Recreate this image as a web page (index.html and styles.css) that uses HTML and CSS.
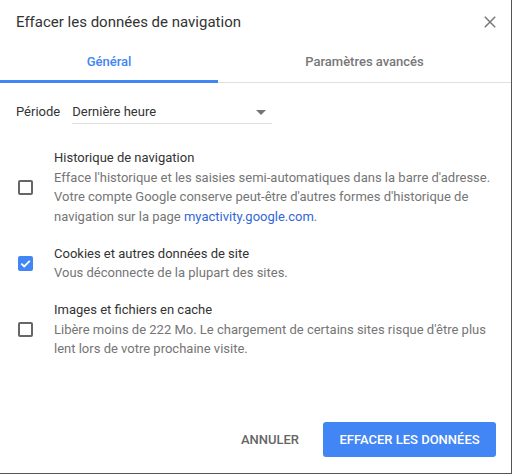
FILE: index.html
```html
<!DOCTYPE html>
<html lang="fr">
<head>
<meta charset="utf-8">
<link rel="stylesheet" href="styles.css">
</head>
<body>
<div class="dialog">
  <div class="header">
    <div class="title">Effacer les données de navigation</div>
    <svg class="close" width="12" height="12" viewBox="0 0 12 12"><path d="M0.8 0.8 L11.2 11.2 M11.2 0.8 L0.8 11.2" stroke="#777" stroke-width="1.5" fill="none"/></svg>
  </div>
  <div class="tabs">
    <div class="tab active">Général</div>
    <div class="tab">Paramètres avancés</div>
  </div>
  <div class="body">
    <div class="period">
      <span class="period-label">Période</span>
      <div class="select">
        <span>Dernière heure</span>
        <span class="arrow"></span>
      </div>
    </div>
    <div class="option">
      <div class="cb"></div>
      <div class="texts">
        <div class="opt-title">Historique de navigation</div>
        <div class="opt-desc">Efface l'historique et les saisies semi-automatiques dans la barre d'adresse. Votre compte Google conserve peut-être d'autres formes d'historique de navigation sur la page <span class="link">myactivity.google.com</span>.</div>
      </div>
    </div>
    <div class="option">
      <div class="cb checked"><svg width="11" height="11" viewBox="0 0 11 11"><path d="M1.3 5.6 L4.2 8.4 L9.8 2.8" stroke="#fff" stroke-width="1.8" fill="none"/></svg></div>
      <div class="texts">
        <div class="opt-title">Cookies et autres données de site</div>
        <div class="opt-desc">Vous déconnecte de la plupart des sites.</div>
      </div>
    </div>
    <div class="option">
      <div class="cb"></div>
      <div class="texts">
        <div class="opt-title">Images et fichiers en cache</div>
        <div class="opt-desc">Libère moins de 222 Mo. Le chargement de certains sites risque d'être plus lent lors de votre prochaine visite.</div>
      </div>
    </div>
  </div>
  <div class="footer">
    <button class="btn cancel">ANNULER</button>
    <button class="btn primary">EFFACER LES DONNÉES</button>
  </div>
</div>
</body>
</html>
```
FILE: styles.css
```css
html, body {
  margin: 0;
  padding: 0;
  background: #fff;
}
body {
  font-family: Roboto, "Liberation Sans", sans-serif;
  color: #333;
}
.dialog {
  width: 511px;
  height: 473px;
  border-right: 1px solid #555;
  border-bottom: 1px solid #555;
  display: flex;
  flex-direction: column;
}
.header {
  display: flex;
  align-items: center;
  justify-content: space-between;
  padding: 12px 16px 0 16px;
  height: 20px;
}
.title {
  font-size: 15px;
  line-height: 20px;
  color: #333;
}
.close {
  display: block;
  margin-right: -1px;
}
.tabs {
  display: flex;
  margin-top: 16px;
  border-bottom: 1px solid #e0e0e0;
}
.tab {
  flex: 1;
  text-align: center;
  font-size: 13px;
  font-weight: 500;
  color: #777;
  line-height: 16px;
  padding: 6px 0 12px 0;
}
.tab.active {
  flex: 0 0 218px;
  color: #4285f4;
  padding-bottom: 9px;
  border-bottom: 3px solid #4285f4;
  margin-bottom: -1px;
}
.body {
  padding: 0 16px;
  flex: 1;
}
.period {
  display: flex;
  align-items: flex-end;
  margin-top: 18px;
  font-size: 13px;
  line-height: 16px;
}
.period-label {
  margin-right: 12px;
  padding-bottom: 4px;
}
.select {
  width: 200px;
  display: flex;
  align-items: center;
  justify-content: space-between;
  border-bottom: 1px solid #e0e0e0;
  padding: 3px 0 3px 0;
}
.arrow {
  width: 0;
  height: 0;
  border-left: 5px solid transparent;
  border-right: 5px solid transparent;
  border-top: 5px solid #757575;
  margin-right: 6px;
}
.option {
  display: flex;
  align-items: center;
  margin-top: 17.5px;
}
.period + .option {
  margin-top: 24px;
}
.cb {
  width: 11px;
  height: 11px;
  border: 2px solid #666;
  border-radius: 2px;
  margin-left: 2px;
  margin-right: 21px;
  flex: none;
  display: flex;
  align-items: center;
  justify-content: center;
}
.cb.checked {
  background: #4285f4;
  border-color: #4285f4;
}
.texts {
  flex: 1;
  font-size: 13px;
  line-height: 19.5px;
}
.opt-title {
  color: #333;
}
.opt-desc {
  color: #757575;
}
.link {
  color: #3367d6;
}
.footer {
  display: flex;
  justify-content: flex-end;
  align-items: center;
  padding: 0 15px 16px 0;
}
.btn {
  font-family: Roboto, "Liberation Sans", sans-serif;
  font-size: 13px;
  font-weight: 500;
  border: none;
  background: none;
  height: 35px;
  border-radius: 3px;
  padding: 0;
}
.cancel {
  color: #666;
  padding: 0 16px;
  margin-right: 8px;
}
.primary {
  background: #4285f4;
  color: #fff;
  width: 173px;
}
```
